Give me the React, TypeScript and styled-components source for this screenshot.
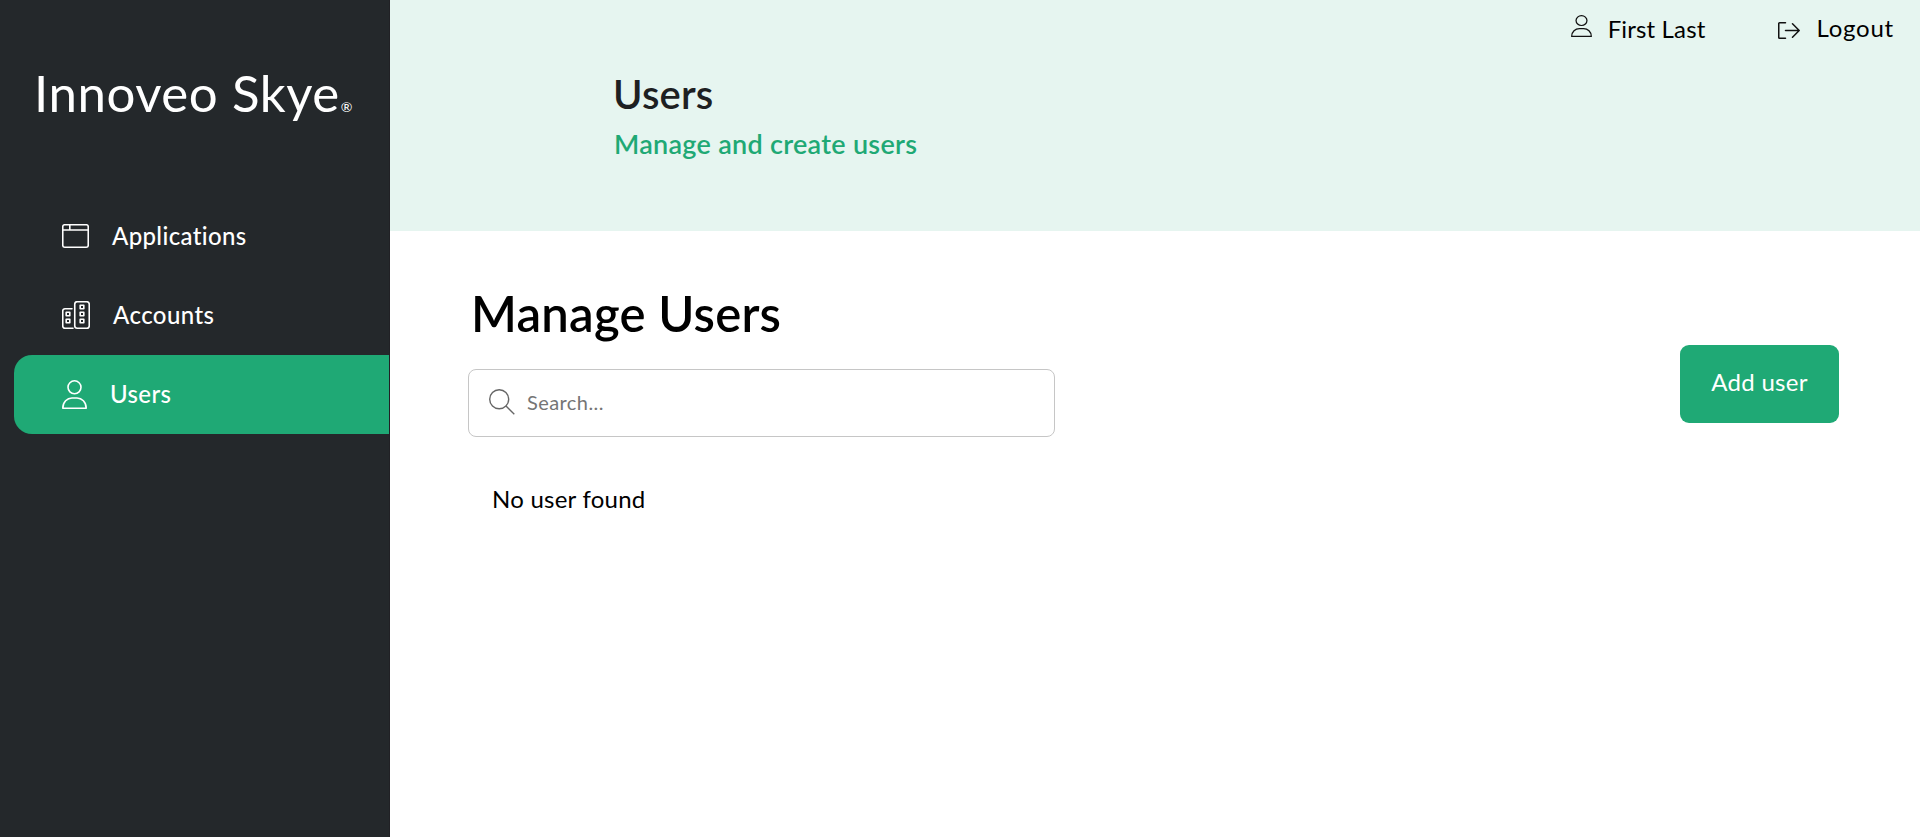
import React from "react";
import styled, { createGlobalStyle } from "styled-components";

const colors = {
  dark: "#24282b",
  edge: "#212125",
  green: "#1fa975",
  mint: "#e6f5f0",
  field: "#c6c6c6",
  muted: "#757575",
};

const GlobalStyle = createGlobalStyle`
  *, *::before, *::after { box-sizing: border-box; }
  body {
    margin: 0;
    background: #fff;
    color: #000;
    font-family: Lato, "Liberation Sans", sans-serif;
  }
  h1, h2, p { margin: 0; }
`;

const Page = styled.div`
  display: flex;
  min-height: 100vh;
`;

const Sidebar = styled.aside`
  flex: 0 0 390px;
  background: ${colors.dark};
  border-right: 1px solid ${colors.edge};
  color: #fff;
`;

const Logo = styled.div`
  display: flex;
  align-items: baseline;
  height: 197px;
  padding: 63px 0 0 34px;
  font-size: 51px;
  line-height: 60px;
  letter-spacing: 0.55px;
  white-space: nowrap;
`;

const Registered = styled.span`
  margin-left: 1px;
  font-size: 14px;
  line-height: 14px;
  letter-spacing: 0;
`;

const Nav = styled.nav`
  display: flex;
  flex-direction: column;
  padding-left: 14px;
`;

const NavItem = styled.a<{ $active?: boolean }>`
  display: flex;
  align-items: center;
  height: 79px;
  padding-left: 48px;
  border-radius: 18px 0 0 18px;
  background: ${(p) => (p.$active ? colors.green : "transparent")};
`;

const NavIcon = styled.svg`
  flex: none;
  margin-right: 23px;
  fill: none;
  stroke: currentColor;
  stroke-width: 1.6;
  stroke-linecap: round;
  stroke-linejoin: round;
`;

const NavLabel = styled.span<{ $tracking: number }>`
  padding-bottom: 1px;
  font-size: 24px;
  font-weight: 500;
  line-height: 28px;
  letter-spacing: ${(p) => p.$tracking}px;
`;

const Main = styled.main`
  flex: 1;
  min-width: 0;
`;

const Header = styled.header`
  height: 231px;
  background: ${colors.mint};
`;

const TopBar = styled.div`
  display: flex;
  justify-content: flex-end;
  gap: 73px;
  height: 71px;
  padding: 14px 26px 0 0;
`;

const TopLink = styled.a<{ $tracking: number; $drop?: number }>`
  display: flex;
  align-items: flex-start;
  gap: 16px;
  font-size: 24px;
  line-height: 28px;
  letter-spacing: ${(p) => p.$tracking}px;

  span { padding-top: ${(p) => p.$drop ?? 0}px; }
`;

const TopIcon = styled.svg<{ $top: number }>`
  flex: none;
  margin-top: ${(p) => p.$top}px;
  fill: none;
  stroke: #111;
  stroke-linecap: round;
  stroke-linejoin: round;
`;

const Heading = styled.div`
  padding-left: 223px;
`;

const PageTitle = styled.h1`
  font-size: 40px;
  font-weight: 600;
  line-height: 47px;
  letter-spacing: 0.2px;
  color: #1d2022;
`;

const Subtitle = styled.p`
  margin-top: 10px;
  padding-left: 1px;
  font-size: 27px;
  font-weight: 600;
  line-height: 32px;
  letter-spacing: 0.28px;
  color: ${colors.green};
`;

const Content = styled.section`
  display: flex;
  justify-content: space-between;
  align-items: flex-start;
  padding: 53px 81px 0 78px;
`;

const SectionTitle = styled.h2`
  padding-left: 3px;
  font-size: 49px;
  font-weight: 600;
  line-height: 59px;
  letter-spacing: 0.24px;
`;

const SearchBox = styled.label`
  display: flex;
  align-items: center;
  gap: 12px;
  width: 587px;
  height: 68px;
  margin-top: 26px;
  padding: 0 20px 3px;
  border: 1px solid ${colors.field};
  border-radius: 8px;
`;

const SearchIcon = styled.svg`
  flex: none;
  fill: none;
  stroke: #666;
  stroke-width: 1.4;
`;

const SearchInput = styled.input`
  flex: 1;
  min-width: 0;
  padding: 0;
  border: 0;
  outline: 0;
  background: transparent;
  font: 400 20px/24px Lato, "Liberation Sans", sans-serif;
  letter-spacing: 0.42px;

  &::placeholder { color: ${colors.muted}; opacity: 1; }
`;

const EmptyText = styled.p`
  margin-top: 48px;
  padding-left: 24px;
  font-size: 24px;
  line-height: 28px;
  letter-spacing: 0.24px;
`;

const AddButton = styled.button`
  width: 159px;
  height: 78px;
  margin-top: 61px;
  padding: 0 0 4px;
  border: 0;
  border-radius: 9px;
  background: ${colors.green};
  color: #fff;
  font: 400 24px/28px Lato, "Liberation Sans", sans-serif;
  letter-spacing: 0.3px;
`;

const AppsIcon = () => (
  <NavIcon width="27" height="25" viewBox="0 0 27 25">
    <rect x="0.75" y="0.75" width="25.5" height="22.5" rx="2" />
    <path d="M1 6H26M7.8 1V6" />
  </NavIcon>
);

const AccountsIcon = () => (
  <NavIcon width="28" height="29" viewBox="0 0 28 29">
    <path d="M10 7.75H3a2.2 2.2 0 0 0-2.25 2.25v15A2.2 2.2 0 0 0 3 27.25h8" />
    <rect x="12.75" y="0.75" width="14.5" height="26.5" rx="2.5" />
    <path d="M4.2 11.2h3.6v3.6H4.2zM4.2 18.2h3.6v3.6H4.2zM18.2 4.2h3.6v3.6h-3.6zM18.2 11.2h3.6v3.6h-3.6zM18.2 18.2h3.6v3.6h-3.6z" />
  </NavIcon>
);

const personShapes = (
  <>
    <circle cx="12.5" cy="7.3" r="6.5" />
    <path d="M0.8 28.2C0.8 22 5.2 18 10 18h5c4.8 0 9.2 4 9.2 10.2Z" />
  </>
);

export default function App() {
  return (
    <>
      <GlobalStyle />
      <Page>
        <Sidebar>
          <Logo>
            Innoveo Skye<Registered>®</Registered>
          </Logo>
          <Nav>
            <NavItem>
              <AppsIcon />
              <NavLabel $tracking={0.35}>Applications</NavLabel>
            </NavItem>
            <NavItem>
              <AccountsIcon />
              <NavLabel $tracking={0.43}>Accounts</NavLabel>
            </NavItem>
            <NavItem $active>
              <NavIcon width="25" height="29" viewBox="0 0 25 29">
                {personShapes}
              </NavIcon>
              <NavLabel $tracking={0.4}>Users</NavLabel>
            </NavItem>
          </Nav>
        </Sidebar>
        <Main>
          <Header>
            <TopBar>
              <TopLink $tracking={0.14} $drop={1}>
                <TopIcon $top={1} width="21" height="22" viewBox="0 0 25 29" preserveAspectRatio="none" strokeWidth="1.5">
                  {personShapes}
                </TopIcon>
                <span>First Last</span>
              </TopLink>
              <TopLink $tracking={0.78}>
                <TopIcon $top={8} width="22" height="17" viewBox="0 0 22 17" strokeWidth="1.5">
                  <path d="M7.5 .75H1.6Q.75.75.75 1.6v13.8q0 .85.85.85H7.5M7.5 8.5H21M14.5 1.7l6.7 6.8L14.5 15.3" />
                </TopIcon>
                <span>Logout</span>
              </TopLink>
            </TopBar>
            <Heading>
              <PageTitle>Users</PageTitle>
              <Subtitle>Manage and create users</Subtitle>
            </Heading>
          </Header>
          <Content>
            <div>
              <SectionTitle>Manage Users</SectionTitle>
              <SearchBox>
                <SearchIcon width="26" height="26" viewBox="0 0 26 26">
                  <circle cx="10.2" cy="10.2" r="9.5" />
                  <path d="M17 17l8.3 8.3" />
                </SearchIcon>
                <SearchInput placeholder="Search..." />
              </SearchBox>
              <EmptyText>No user found</EmptyText>
            </div>
            <AddButton>Add user</AddButton>
          </Content>
        </Main>
      </Page>
    </>
  );
}
